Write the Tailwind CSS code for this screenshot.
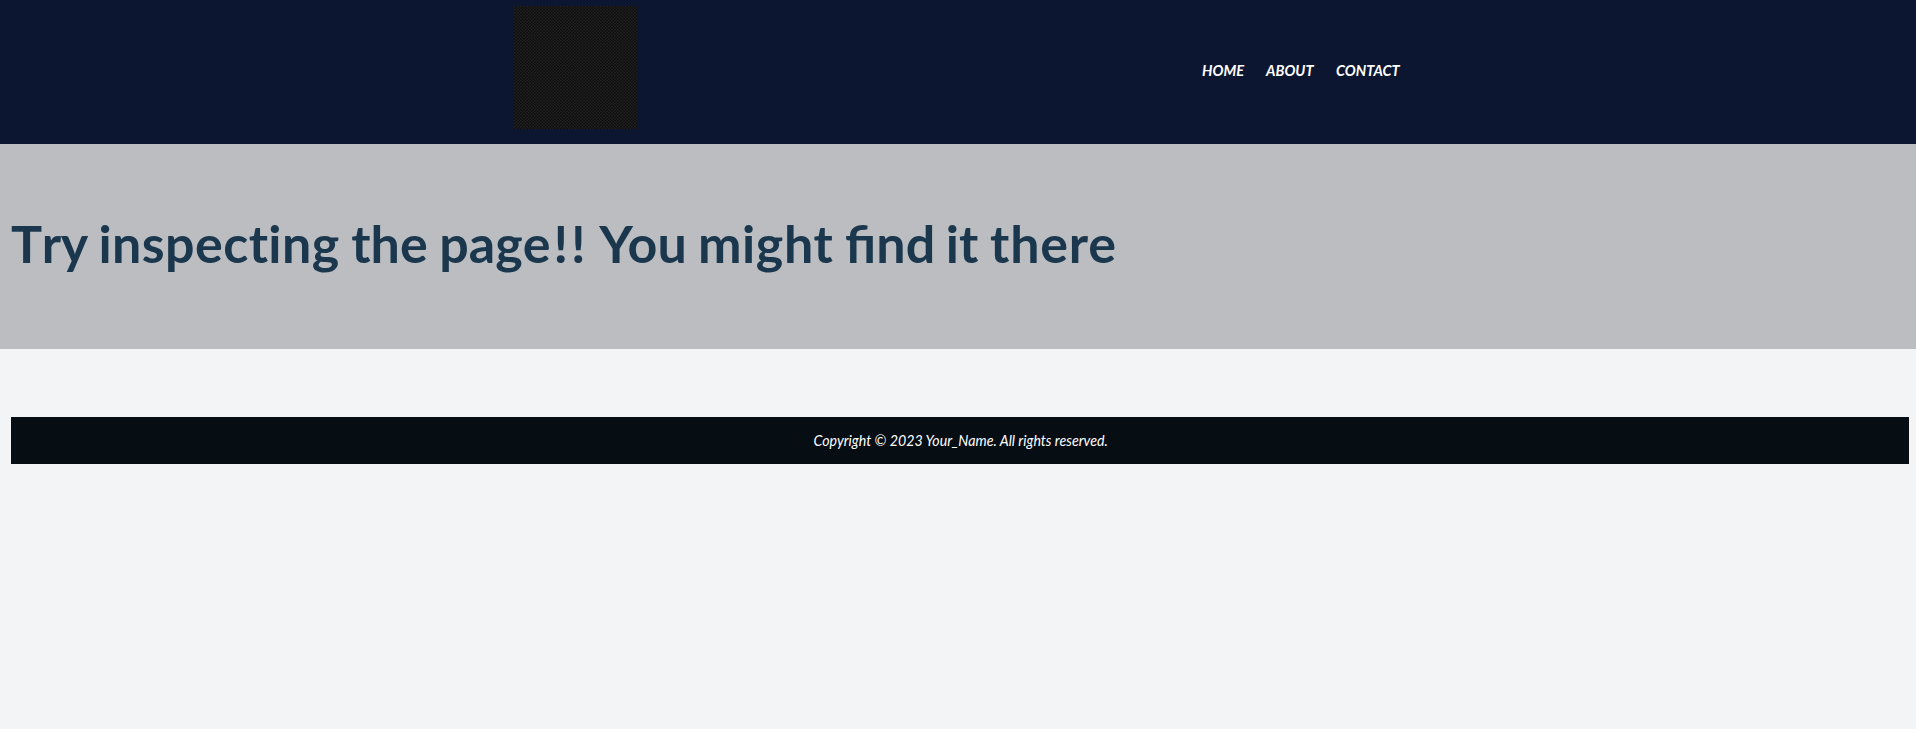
<!DOCTYPE html>
<html lang="en">
<head>
<meta charset="utf-8">
<title>Inspect</title>
<script src="https://cdn.jsdelivr.net/npm/@tailwindcss/browser@4"></script>
</head>
<body class="bg-[#f3f4f6] font-['Lato',sans-serif]">
<header class="flex h-36 items-start bg-[#0c1631]">
  <svg class="mt-1.5 ml-[514px] h-[123px] w-[123px] shrink-0" viewBox="0 0 123 123">
    <defs>
      <pattern id="weave" width="3.08" height="3.08" patternUnits="userSpaceOnUse">
        <rect width="3.08" height="3.08" fill="#151515"/>
        <rect width="1.54" height="1.03" fill="#242424"/>
        <rect x="1.54" y="1.54" width="1.54" height="1.03" fill="#242424"/>
        <rect x="1.54" width="1.54" height="1.03" fill="#0b0b0b"/>
        <rect y="1.54" width="1.54" height="1.03" fill="#0b0b0b"/>
      </pattern>
    </defs>
    <rect width="123" height="123" fill="url(#weave)"/>
  </svg>
  <nav class="mt-[58px] ml-[565px] flex text-base leading-6 font-bold text-white italic">
    <a class="w-16 origin-left scale-x-[0.91]">HOME</a><a class="w-[70px] origin-left scale-x-[0.91]">ABOUT</a><a class="origin-left scale-x-[0.91]">CONTACT</a>
  </nav>
</header>
<main class="flex h-[205px] items-center bg-[#bcbdc1] pb-2 pl-[11px]">
  <h1 class="text-[52px] leading-none font-bold whitespace-nowrap text-[#1a374d] [word-spacing:-1px]"><span class="mr-[-1px] tracking-[-0.4px] [font-kerning:none]">Try</span> <span class="tracking-[0.4px] [font-variant-ligatures:none]">inspecting</span> the <span class="[font-kerning:none]">page<span class="ml-[3px] tracking-[3px]">!!</span></span> <span class="mr-[-1px] ml-[-1px] tracking-[0.3px]">You</span> <span class="tracking-[0.6px]">might</span> <span class="mr-[-1px]">find</span> it <span class="tracking-[0.8px]">there</span></h1>
</main>
<footer class="mt-[68px] mr-[7px] ml-[11px] flex h-[47px] items-center justify-center bg-[#060d13] pb-0.5 pl-px text-base text-white italic">
  <p class="scale-x-[0.888]">Copyright © 2023 Your_Name. All rights reserved.</p>
</footer>
</body>
</html>
